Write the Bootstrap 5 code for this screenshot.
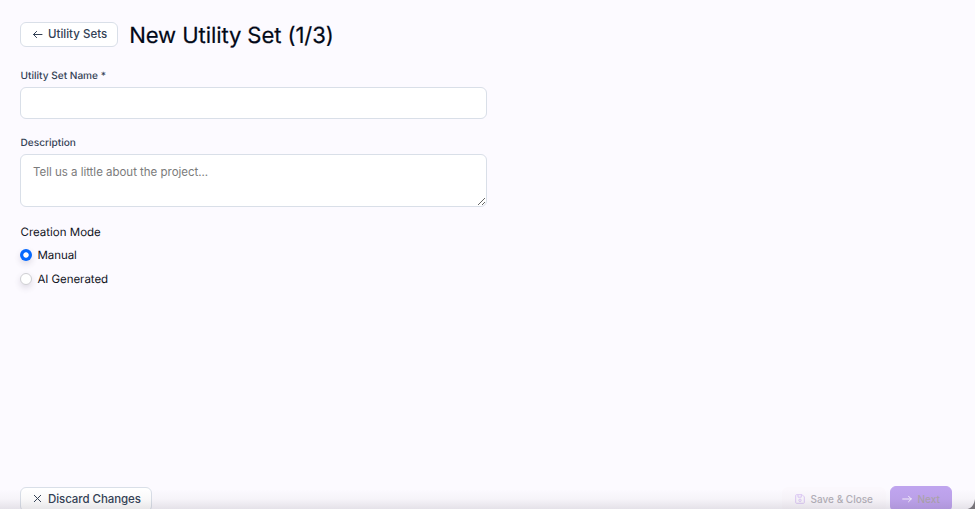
<!DOCTYPE html>
<html lang="en">
<head>
<meta charset="utf-8">
<meta name="viewport" content="width=device-width, initial-scale=1">
<title>New Utility Set</title>
<link href="https://cdn.jsdelivr.net/npm/bootstrap@5.3.0/dist/css/bootstrap.min.css" rel="stylesheet">
<style>
body{font-family:Inter,sans-serif;background:#fcfaff;color:#10131c;font-size:11.5px;line-height:16px;height:509px;overflow:hidden;text-rendering:geometricPrecision}
.page{height:509px;padding:22px 23px 0 20px}
.page-head{height:25px;gap:11px;margin-bottom:22px}
.page-title{font-size:22.1px;line-height:25px;padding-top:3px;font-weight:400;letter-spacing:-.1px;color:#020817;-webkit-text-stroke:.2px #020817}
.tool-btn{--bs-btn-font-size:11.5px;--bs-btn-font-weight:500;--bs-btn-line-height:16px;--bs-btn-color:#334155;--bs-btn-bg:#fff;--bs-btn-border-color:#d9dfe8;--bs-btn-border-radius:6px;height:25px;padding:0 10px 1px 10.5px;gap:5.5px}
.tool-btn svg{flex:none}
.fields{width:467px}
.form-label{font-size:10.1px;line-height:14px;font-weight:500;color:#334155;padding-left:.5px;margin-bottom:4px}
.form-control,.form-control:focus{border-color:#d9dfe8;border-radius:6px;font-size:11.5px;line-height:16px;padding:9px 12px;box-shadow:none}
.form-control::placeholder{color:#7b7b7b}
.name-input{height:32px}
.name-group{margin-bottom:17px}
.desc-group{margin-bottom:17px}
.mode-group{gap:7px}
.mode-title{margin-bottom:-1px;padding-left:.5px}
.desc-input{height:53px;min-height:53px;resize:vertical;letter-spacing:-.02px}
.form-check{min-height:17px;padding:0;gap:5.5px;letter-spacing:-.06px}
.form-check .form-check-input{width:12px;height:12px;margin:0;float:none;flex:none;border:1px solid #cfcfd3;box-shadow:0 3px 6px rgba(60,50,90,.16)}
.form-check .form-check-input:checked{border:0;background:radial-gradient(circle,#fff 2.3px,#0568fd 3.1px)}
.footer-bar{height:22px}
.footer-bar .tool-btn{height:25px;padding-bottom:2px}
.footer-bar .discard-btn{letter-spacing:-.07px}
.footer-bar .save-btn{--bs-btn-disabled-color:#b4b1b9;--bs-btn-disabled-bg:#fbf8fd;--bs-btn-disabled-border-color:transparent;--bs-btn-disabled-opacity:1;font-size:10px;padding-right:12px;padding-left:12px;margin-right:4px}
.footer-bar .next-btn{--bs-btn-disabled-color:#aea5b0;--bs-btn-disabled-bg:#bfa4ee;--bs-btn-disabled-border-color:#bfa4ee;--bs-btn-disabled-opacity:1;font-size:10px;width:62px;padding:0 11px;height:26px;margin-top:-1px}
.shade{height:20px;background:linear-gradient(rgba(60,50,70,0),rgba(60,50,70,.03) 50%,rgba(60,50,70,.12));pointer-events:none}
.corner{width:9px;height:12px;pointer-events:none}
</style>
</head>
<body>
<main class="page d-flex flex-column position-relative">
  <header class="page-head d-flex align-items-center">
    <button type="button" class="btn tool-btn d-inline-flex align-items-center">
      <svg width="11" height="11" viewBox="0 0 11 11" fill="none" stroke="#334155" stroke-linecap="round" stroke-linejoin="round"><path d="M10 5.500H1.500M4.600 2.400 1.500 5.500l3.100 3.100"/></svg>
      <span>Utility Sets</span>
    </button>
    <h1 class="page-title mb-0">New Utility Set (1/3)</h1>
  </header>
  <form class="fields">
    <div class="name-group d-flex flex-column">
      <label class="form-label" for="setName">Utility Set Name *</label>
      <input class="form-control name-input" id="setName" type="text">
    </div>
    <div class="desc-group d-flex flex-column">
      <label class="form-label" for="setDesc">Description</label>
      <textarea class="form-control desc-input" id="setDesc" placeholder="Tell us a little about the project..."></textarea>
    </div>
    <div class="mode-group d-flex flex-column">
      <span class="mode-title">Creation Mode</span>
      <div class="form-check d-flex align-items-center mb-0"><input class="form-check-input" type="radio" name="mode" id="manual" checked><label for="manual">Manual</label></div>
      <div class="form-check d-flex align-items-center mb-0"><input class="form-check-input" type="radio" name="mode" id="ai"><label for="ai">AI Generated</label></div>
    </div>
  </form>
  <footer class="footer-bar d-flex align-items-start mt-auto">
    <button type="button" class="btn tool-btn discard-btn d-inline-flex align-items-center me-auto">
      <svg width="11" height="11" viewBox="0 0 11 11" fill="none" stroke="#334155" stroke-linecap="round"><path d="m2.300 2.300 6.400 6.400M8.700 2.300 2.300 8.700"/></svg>
      <span>Discard Changes</span>
    </button>
    <button type="button" class="btn tool-btn save-btn d-inline-flex align-items-center" disabled>
      <svg width="10" height="10" viewBox="0 0 10 10" fill="none" stroke="#dcc8f6" stroke-linejoin="round"><path d="M1.500.7h5.600l2.200 2.200v5.600a.8.8 0 0 1-.8.8h-7a.8.8 0 0 1-.8-.8v-7a.8.8 0 0 1 .8-.8ZM3 .8v2.400h3.300V.8"/><circle cx="5" cy="6.300" r="1.200"/></svg>
      <span>Save &amp; Close</span>
    </button>
    <button type="button" class="btn tool-btn next-btn d-inline-flex align-items-center" disabled>
      <svg width="10" height="10" viewBox="0 0 10 10" fill="none" stroke="#f8f2ff" stroke-linecap="round" stroke-linejoin="round"><path d="M.7 5h8.600M6.500 2.200 9.300 5 6.500 7.800"/></svg>
      <span>Next</span>
    </button>
  </footer>
  <div class="shade position-absolute start-0 end-0 bottom-0"></div>
  <svg class="corner position-absolute end-0 bottom-0" viewBox="0 0 9 12"><path d="M9 2v10H1.500C6 11 8.300 7 9 2Z" fill="#77747a"/></svg>
</main>
<script src="https://cdn.jsdelivr.net/npm/bootstrap@5.3.0/dist/js/bootstrap.bundle.min.js"></script>
</body>
</html>
